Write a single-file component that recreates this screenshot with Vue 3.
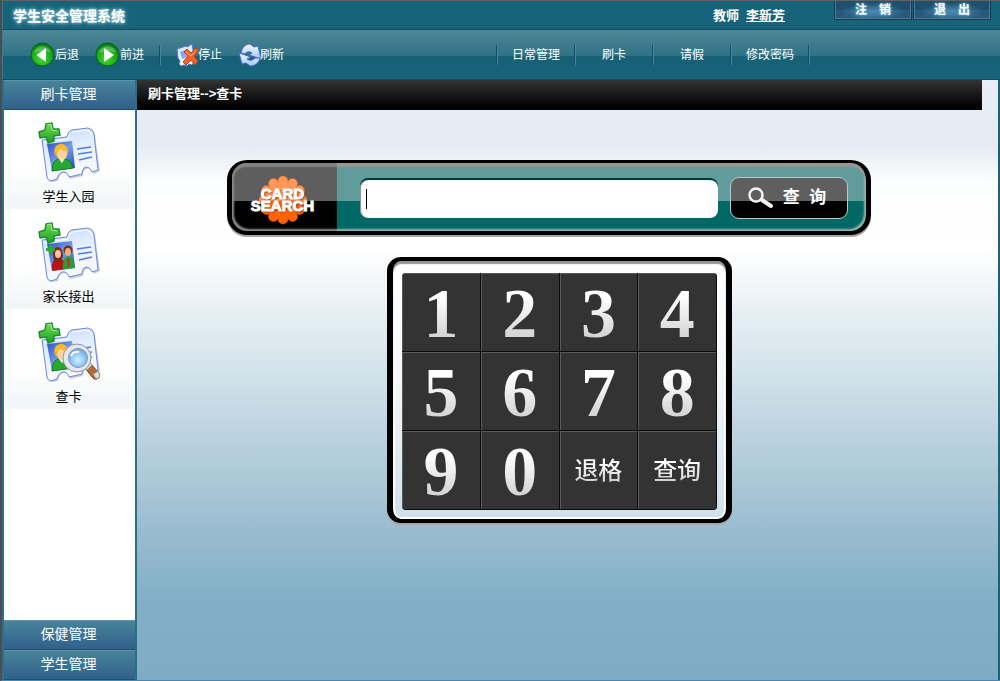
<script setup>
import { ref, onMounted } from 'vue'

const navItems = ['日常管理', '刷卡', '请假', '修改密码']
const cards = [
  { label: '学生入园', kind: 'student' },
  { label: '家长接出', kind: 'parents' },
  { label: '查卡', kind: 'search' }
]
const keys = ['1', '2', '3', '4', '5', '6', '7', '8', '9', '0', '退格', '查询']
const petals = Array.from({ length: 12 }, (_, i) => {
  const a = (i * Math.PI) / 6
  return { x: Math.round(Math.sin(a) * 190) / 10, y: Math.round(Math.cos(a) * 190) / 10 }
})

const code = ref('')
const field = ref(null)

function press(key) {
  if (key === '退格') code.value = code.value.slice(0, -1)
  else if (key !== '查询') code.value += key
  field.value.focus()
}

onMounted(() => field.value.focus())
</script>

<template>
  <div class="app">
    <svg class="defs" width="0" height="0" aria-hidden="true">
      <defs>
        <radialGradient id="green" cx="45%" cy="70%" r="65%">
          <stop offset="0" stop-color="#3fdc2a" />
          <stop offset="0.6" stop-color="#1fae1b" />
          <stop offset="1" stop-color="#0c7a18" />
        </radialGradient>
        <linearGradient id="paper" x1="0" y1="0" x2="0.3" y2="1">
          <stop offset="0" stop-color="#c3d8fb" />
          <stop offset="0.5" stop-color="#e6efff" />
          <stop offset="1" stop-color="#f8fbff" />
        </linearGradient>
        <linearGradient id="photo" x1="0" y1="0" x2="1" y2="1">
          <stop offset="0" stop-color="#2a4fc0" />
          <stop offset="0.5" stop-color="#6f9cf0" />
          <stop offset="1" stop-color="#2344a8" />
        </linearGradient>
        <linearGradient id="plus" x1="0" y1="0" x2="0" y2="1">
          <stop offset="0" stop-color="#6fe04f" />
          <stop offset="1" stop-color="#1d9c27" />
        </linearGradient>
        <linearGradient id="arrow" x1="0" y1="0" x2="0" y2="1">
          <stop offset="0" stop-color="#f4f9ff" />
          <stop offset="1" stop-color="#a3c3f5" />
        </linearGradient>
        <radialGradient id="lens" cx="50%" cy="60%" r="60%">
          <stop offset="0" stop-color="#d6f3ff" />
          <stop offset="1" stop-color="#5ea8f2" />
        </radialGradient>
        <linearGradient id="petal" gradientUnits="userSpaceOnUse" x1="0" y1="-25" x2="0" y2="25">
          <stop offset="0" stop-color="#ff9a5c" />
          <stop offset="0.52" stop-color="#ff9350" />
          <stop offset="0.53" stop-color="#ff6a10" />
          <stop offset="1" stop-color="#ff6000" />
        </linearGradient>
      </defs>
    </svg>

    <header class="top">
      <h1>学生安全管理系统</h1>
      <p class="user"><span>教师</span><a href="#">李新芳</a></p>
      <div class="session">
        <button type="button">注　销</button>
        <button type="button">退　出</button>
      </div>
    </header>

    <div class="toolbar">
      <button type="button" class="tool back">
        <svg width="25" height="25" viewBox="0 0 25 25" aria-hidden="true">
          <circle cx="12.5" cy="12.5" r="11.5" fill="url(#green)" stroke="#075f1c" />
          <path d="M4 11a8.7 8.7 0 0 1 17 0q-8-4-17 0z" fill="#fff" opacity=".28" />
          <path d="M16 6v14L6.5 13z" fill="#fff" />
        </svg>后退
      </button>
      <button type="button" class="tool forward">
        <svg width="25" height="25" viewBox="0 0 25 25" aria-hidden="true">
          <circle cx="12.5" cy="12.5" r="11.5" fill="url(#green)" stroke="#075f1c" />
          <path d="M4 11a8.7 8.7 0 0 1 17 0q-8-4-17 0z" fill="#fff" opacity=".28" />
          <path d="M9 6v14l10-7z" fill="#fff" />
        </svg>前进
      </button>
      <i class="sep"></i>
      <button type="button" class="tool stop">
        <svg width="24" height="24" viewBox="0 0 24 24" aria-hidden="true">
          <path d="M1 6l9-3 1 1 5-3 1 6 1 12-2 3-3-1-2 2-3-1-3 1-2-2 1-3-2-3z" fill="url(#paper)" stroke="#5379d8" />
          <path d="M4 9l5-2 2 7-5 2z" fill="#86a8f0" />
          <path d="M8 9l3-3 4 4 5-5 3 2-5 6 4 5-3 4-4-5-5 5-3-3 5-6z" fill="#f5632b" stroke="#c23a14" />
          <path d="M10 9l5 4 5-5" fill="none" stroke="#ffb28c" />
        </svg>停止
      </button>
      <button type="button" class="tool refresh">
        <svg width="24" height="24" viewBox="0 0 24 24" aria-hidden="true">
          <path d="M3 10C4 4 8 1 12 1l4 3 4-1 3 13-12-4 3-2q-4-3-7 1z" fill="url(#arrow)" stroke="#4468cc" stroke-linejoin="round" />
          <path d="M22 15C21 20 17 23 12 23l-4-3-4 1L1 10l12 4-4 2q4 3 8-1z" fill="url(#arrow)" stroke="#4468cc" stroke-linejoin="round" />
        </svg>刷新
      </button>
      <nav>
        <a v-for="item in navItems" :key="item" href="#">{{ item }}</a>
      </nav>
    </div>

    <div class="body">
      <aside>
        <button type="button" class="group">刷卡管理</button>
        <div class="cards">
          <a v-for="card in cards" :key="card.kind" href="#" class="card">
            <svg width="66" height="64" viewBox="0 0 66 64" aria-hidden="true">
              <path d="M7 20L31 17Q32 10 36 9L53 8Q58 9 59 14L64 50 58 53Q54 45 49 49 47 51 47 55L34 58Q32 51 27 52 23 54 22 60L16 61Q13 61 12 57Z" fill="#8a94a8" opacity=".45" />
              <path d="M6 19L31 16Q32 10 36 9L52 7Q57 8 58 13L62 49 56 51Q53 44 48 47 46 49 46 53L33 56Q31 50 26 51 22 53 21 58L15 60Q12 60 11 56Z" fill="url(#paper)" stroke="#6c88d8" />
              <path d="M8 21L32 18Q33 12 37 11L51 9Q55 10 56 14" fill="none" stroke="#fff" />
              <path d="M11 23L36 20 39 47 16 50Z" fill="url(#photo)" />
              <g v-if="card.kind === 'parents'">
                <path d="M16 50q-2-11 6-13 7 0 8 11z" fill="#b81414" />
                <path d="M27 48q-1-11 5-13 6 0 7 12z" fill="#23a331" />
                <path d="M17 34q0-8 5-8 5 1 5 9l-2 5-7 1z" fill="#7a2a12" />
                <ellipse cx="22" cy="33" rx="3" ry="4" fill="#ffc29b" />
                <circle cx="32" cy="29" r="4.5" fill="#7a2f14" />
                <ellipse cx="32" cy="31" rx="3" ry="4" fill="#f6ad7d" />
                <path d="M31 37l2 0 1 7-2 3z" fill="#d22" />
                <path d="M13 24h3v3h3v3h-3v3h-3v-3h-3v-3h3z" fill="#27ad2f" />
              </g>
              <g v-else>
                <path d="M16 50Q16 38 24 38 34 36 37 47Z" fill="#28a832" stroke="#147a20" />
                <path d="M23 38l3 4 3-5z" fill="#fff" />
                <circle cx="25" cy="30" r="7" fill="#f0ae22" />
                <ellipse cx="26" cy="33" rx="5" ry="6" fill="#ffd3a0" />
                <path d="M19 31q0-8 7-8 5 1 6 7-5 0-7-2-2 3-6 3z" fill="#f5bb32" />
              </g>
              <path d="M41 28L55 26M42 33L56 31M43 39L56 36" stroke="#547ce0" stroke-width="1.5" />
              <path d="M10 3L16 2 17 8 23 8 24 14 18 15 18 20 12 22 10 16 4 17 3 11 9 9Z" fill="url(#plus)" stroke="#1f8c33" stroke-linejoin="round" stroke-width="1.5" />
              <path d="M11 4l4-1 1 6 5 1" fill="none" stroke="#a6ef8b" />
              <g v-if="card.kind === 'search'">
                <path d="M49 47l5-5 9 10q2 4-2 6-3 1-5-2z" fill="#b96a32" stroke="#864319" />
                <path d="M57 53l5-3 2 4q0 4-4 4z" fill="#ddd" stroke="#888" />
                <path d="M47 43l5-4 4 5-5 5z" fill="#ddd" stroke="#999" />
                <circle cx="41" cy="37" r="14" fill="#e5e7ea" stroke="#92979e" />
                <circle cx="42" cy="37" r="9.5" fill="url(#lens)" stroke="#8494b2" />
                <path d="M35 35q2-5 8-4" stroke="#fff" stroke-width="2" fill="none" />
              </g>
            </svg>
            <span>{{ card.label }}</span>
          </a>
        </div>
        <button type="button" class="group">保健管理</button>
        <button type="button" class="group">学生管理</button>
      </aside>

      <main>
        <div class="crumb">刷卡管理--&gt;查卡</div>
        <div class="stage">
          <form class="search" @submit.prevent>
            <div class="logo">
              <svg width="50" height="50" viewBox="-25 -25 50 50" aria-hidden="true">
                <g fill="url(#petal)" stroke="#d9641f" stroke-opacity=".5">
                  <circle v-for="(p, i) in petals" :key="i" :cx="p.x" :cy="p.y" r="5" />
                </g>
                <circle r="18" fill="url(#petal)" />
              </svg>
              <strong><span>CARD</span><span>SEARCH</span></strong>
            </div>
            <input ref="field" v-model="code" :class="{ empty: !code }" type="text" aria-label="卡号">
            <button type="submit">
              <svg width="26" height="22" viewBox="0 0 26 22" aria-hidden="true">
                <circle cx="8" cy="8" r="6.5" fill="none" stroke="#f2f2f2" stroke-width="2.5" />
                <path d="M14 13l9 6" stroke="#f2f2f2" stroke-width="4" stroke-linecap="round" />
              </svg>
              <span>查&nbsp;&nbsp;询</span>
            </button>
          </form>

          <div class="pad">
            <div class="keys">
              <button v-for="k in keys" :key="k" type="button" @click="press(k)">
                <span :class="k.length > 1 ? 'word' : 'digit'">{{ k }}</span>
              </button>
            </div>
          </div>
        </div>
      </main>
    </div>
  </div>
</template>

<style>
body {
  background: #186278;
}
</style>

<style scoped>
.app {
  box-sizing: border-box;
  min-height: 100vh;
  display: flex;
  flex-direction: column;
  border-top: 1px solid #665f60;
  border-left: 2px solid #4b4d50;
  border-bottom: 1px solid #4a86a8;
  background: #17637a;
  color: #fff;
  font: 12px/16px "Liberation Sans", "Noto Sans CJK SC", sans-serif;
}
.defs {
  position: absolute;
}
button {
  margin: 0;
  padding: 0;
  border: 0;
  background: none;
  color: inherit;
  font: inherit;
  cursor: pointer;
}
a {
  color: inherit;
}

.top {
  display: flex;
  align-items: flex-start;
  height: 28px;
  padding: 0 9px 0 10px;
  border-left: 1px solid #357d98;
  border-bottom: 1px solid #11496a;
}
h1 {
  margin: 0 auto 0 0;
  font-size: 14px;
  line-height: 31px;
  font-weight: 700;
  text-shadow: 0 0 3px #9fd0dc, 0 0 5px #9fd0dc;
}
.user {
  display: flex;
  gap: 7px;
  margin: 0 49px 0 0;
  font-size: 13px;
  font-weight: 700;
  line-height: 29px;
}
.session {
  display: flex;
  gap: 1px;
}
.session button {
  box-sizing: border-box;
  width: 78px;
  height: 19px;
  border: 1px solid #163a54;
  border-top: 0;
  box-shadow: inset 1px 0 #4c7b93, inset -1px -1px #4c7b93;
  background: radial-gradient(ellipse at 50% 60%, #4c8cb4, transparent 60%), linear-gradient(#1d506b 0 50%, #28587a 50%);
  font-weight: 700;
  line-height: 18px;
  text-shadow: 0 0 3px #9cd4ff;
}

.toolbar {
  display: flex;
  align-items: center;
  height: 49px;
  padding: 0 190px 0 27px;
  border-left: 1px solid #357d98;
  border-bottom: 1px solid #11496a;
  background: linear-gradient(#4d8795, #2f7385 52%, #176076 53%, #18647a);
}
.tool {
  display: flex;
  align-items: center;
  margin-right: 16px;
  white-space: nowrap;
}
.forward {
  margin-right: 15px;
}
.stop svg,
.refresh svg {
  margin-right: -2px;
}
.sep {
  width: 1px;
  height: 20px;
  margin-right: 15px;
  background: #1a4c6c;
  border-right: 1px solid #4386a0;
}
nav {
  display: flex;
  margin-left: auto;
  border-left: 1px solid #1a4c6c;
  border-right: 1px solid #4386a0;
}
nav a {
  box-sizing: border-box;
  width: 78px;
  border-left: 1px solid #4386a0;
  border-right: 1px solid #1a4c6c;
  line-height: 20px;
  text-align: center;
  text-decoration: none;
}

.body {
  flex: 1;
  display: flex;
}
aside {
  box-sizing: border-box;
  width: 135px;
  display: flex;
  flex-direction: column;
  border-left: 2px solid #2a7091;
  border-right: 2px solid #2c6d8c;
}
.group {
  height: 30px;
  padding: 0 2px 2px 0;
  border-top: 1px solid #5d95ac;
  border-bottom: 1px solid #204e75;
  box-sizing: border-box;
  background: linear-gradient(#488399, #30608b);
  font-size: 14px;
  line-height: 26px;
}
.cards {
  flex: 1;
  background: #fff;
}
.card {
  box-sizing: border-box;
  height: 100px;
  display: flex;
  flex-direction: column;
  align-items: center;
  padding: 10px 2px 0 0;
  background: linear-gradient(#fff 55%, #f1f5f6);
  border: 1px solid #fff;
  color: #000;
  font-size: 13px;
  text-decoration: none;
}
.card span {
  margin-top: 4px;
}

main {
  flex: 1;
  min-width: 0;
  margin-right: 2px;
  background: linear-gradient(#e8eef4, #e4ebf3 11%, #fcfdfe 17%, #fff 28%, #e9f0f5 38%, #d3e4ea 48%, #c1d5e3 57%, #a8c7d5 68%, #9abcd2 75%, #83b0c6 86%, #7facc4);
}
.crumb {
  height: 30px;
  margin-right: 16px;
  padding-left: 11px;
  box-sizing: border-box;
  background: linear-gradient(#333, #000 90%);
  font-size: 13px;
  line-height: 28px;
  font-weight: 700;
}
.stage {
  max-width: 644px;
  padding: 50px 36px 40px 90px;
}

.search {
  box-sizing: border-box;
  height: 75px;
  display: flex;
  align-items: center;
  padding-right: 18px;
  border: solid #000;
  border-width: 3px 5px 4px;
  border-radius: 20px;
  background: linear-gradient(#5f9c9a 0 38px, #006865 38px);
  box-shadow: inset 0 4px 1px #9a9696, inset 2px 0 2px #aaa, inset -2px -2px 2px #8eb4b3, 0 2px #aaa4a5;
}
.logo {
  box-sizing: border-box;
  align-self: stretch;
  width: 105px;
  padding: 5px 4px 0 0;
  flex: none;
  display: grid;
  place-items: center;
  border-radius: 15px 0 0 15px;
  background: linear-gradient(#5e5e5e 0 38px, #000 38px);
  box-shadow: inset 0 4px 1px #858282, inset 2px -2px 2px #8b8b8b;
}
.logo svg,
.logo strong {
  grid-area: 1 / 1;
}
.logo strong {
  z-index: 1;
  font-size: 15px;
  line-height: 12px;
  text-align: center;
  -webkit-text-stroke: 1px #fff;
  text-shadow: 1px 1px 2px #5c2a0c;
}
.logo span {
  display: block;
}
.search input {
  box-sizing: border-box;
  flex: 1;
  min-width: 0;
  height: 38px;
  margin: 4px 12px 0 23px;
  padding: 0 6px;
  border: 0;
  border-radius: 8px;
  outline: 0;
  background: #fff;
  box-shadow: 0 -2px #003a3a, inset 1px 0 1px #889;
  color: #000;
  font: 20px/24px "Liberation Sans", sans-serif;
}
.search .empty {
  caret-color: transparent;
  background: linear-gradient(#000, #000) 6px center / 1px 20px no-repeat #fff;
}
.search button {
  box-sizing: border-box;
  width: 118px;
  height: 42px;
  margin-top: 2px;
  display: flex;
  align-items: center;
  justify-content: center;
  gap: 9px;
  padding-right: 4px;
  border: 1px solid #b9c8c8;
  border-radius: 9px;
  background: linear-gradient(#5f5f5f 0 23px, #000 23px);
  font-size: 17px;
  font-weight: 700;
}

.pad {
  box-sizing: border-box;
  width: 345px;
  margin: 22px 0 0 160px;
  padding: 12px 9px 9px;
  border: solid #000;
  border-width: 4px 6px 4px;
  border-radius: 14px;
  background: linear-gradient(#fff, #f4f8fa 45%, #cfe0e9);
  box-shadow: inset 0 3px 1px #979393, inset 0 0 0 2px #fff, 0 2px #aaa4a5;
}
.keys {
  display: grid;
  grid-template-columns: repeat(4, 1fr);
  grid-auto-rows: 79px;
  overflow: hidden;
  border-radius: 4px;
  background: #333;
}
.keys button {
  border-right: 1px solid #0b0b0b;
  border-bottom: 1px solid #0b0b0b;
  box-shadow: inset 1px 1px #5a5a5a;
}
.digit,
.word {
  display: block;
  background: linear-gradient(#fff 30%, #d0d0d0 85%);
  background-clip: text;
  -webkit-background-clip: text;
  color: transparent;
}
.digit {
  padding-top: 3px;
  font: 700 70px/76px "Liberation Serif", serif;
}
.word {
  padding-top: 2px;
  font-size: 24px;
  line-height: 30px;
  font-weight: 500;
}
</style>
